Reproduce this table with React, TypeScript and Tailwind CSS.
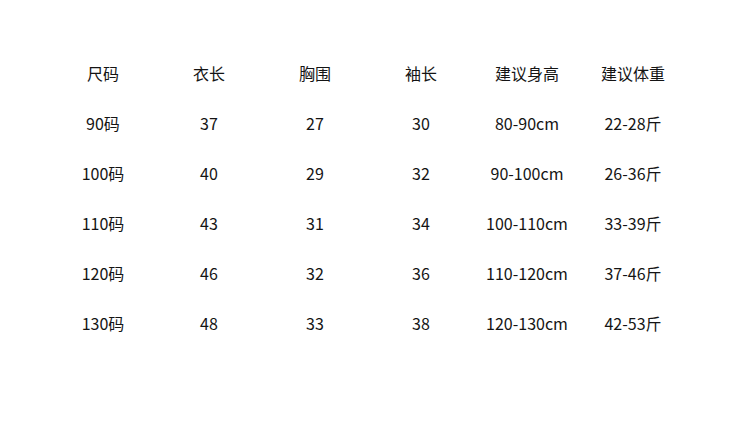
const header = ["尺码", "衣长", "胸围", "袖长", "建议身高", "建议体重"];

const rows = [
  ["90码", "37", "27", "30", "80-90cm", "22-28斤"],
  ["100码", "40", "29", "32", "90-100cm", "26-36斤"],
  ["110码", "43", "31", "34", "100-110cm", "33-39斤"],
  ["120码", "46", "32", "36", "110-120cm", "37-46斤"],
  ["130码", "48", "33", "38", "120-130cm", "42-53斤"],
];

const Row = ({ cells }: { cells: string[] }) => (
  <div className="grid grid-cols-[repeat(6,106px)] h-[50px] items-center">
    {cells.map((c, i) => (
      <div key={i} className="text-center">
        {c}
      </div>
    ))}
  </div>
);

const App = () => {
  return (
    <div
      className="w-[750px] h-[432px] bg-white pl-[50px] pt-[48px] text-[16px] text-[#141414]"
      style={{ fontFamily: '"Noto Sans CJK SC", "Noto Sans", sans-serif' }}
    >
      <Row cells={header} />
      {rows.map((r, i) => (
        <Row key={i} cells={r} />
      ))}
    </div>
  );
};

export default App;
